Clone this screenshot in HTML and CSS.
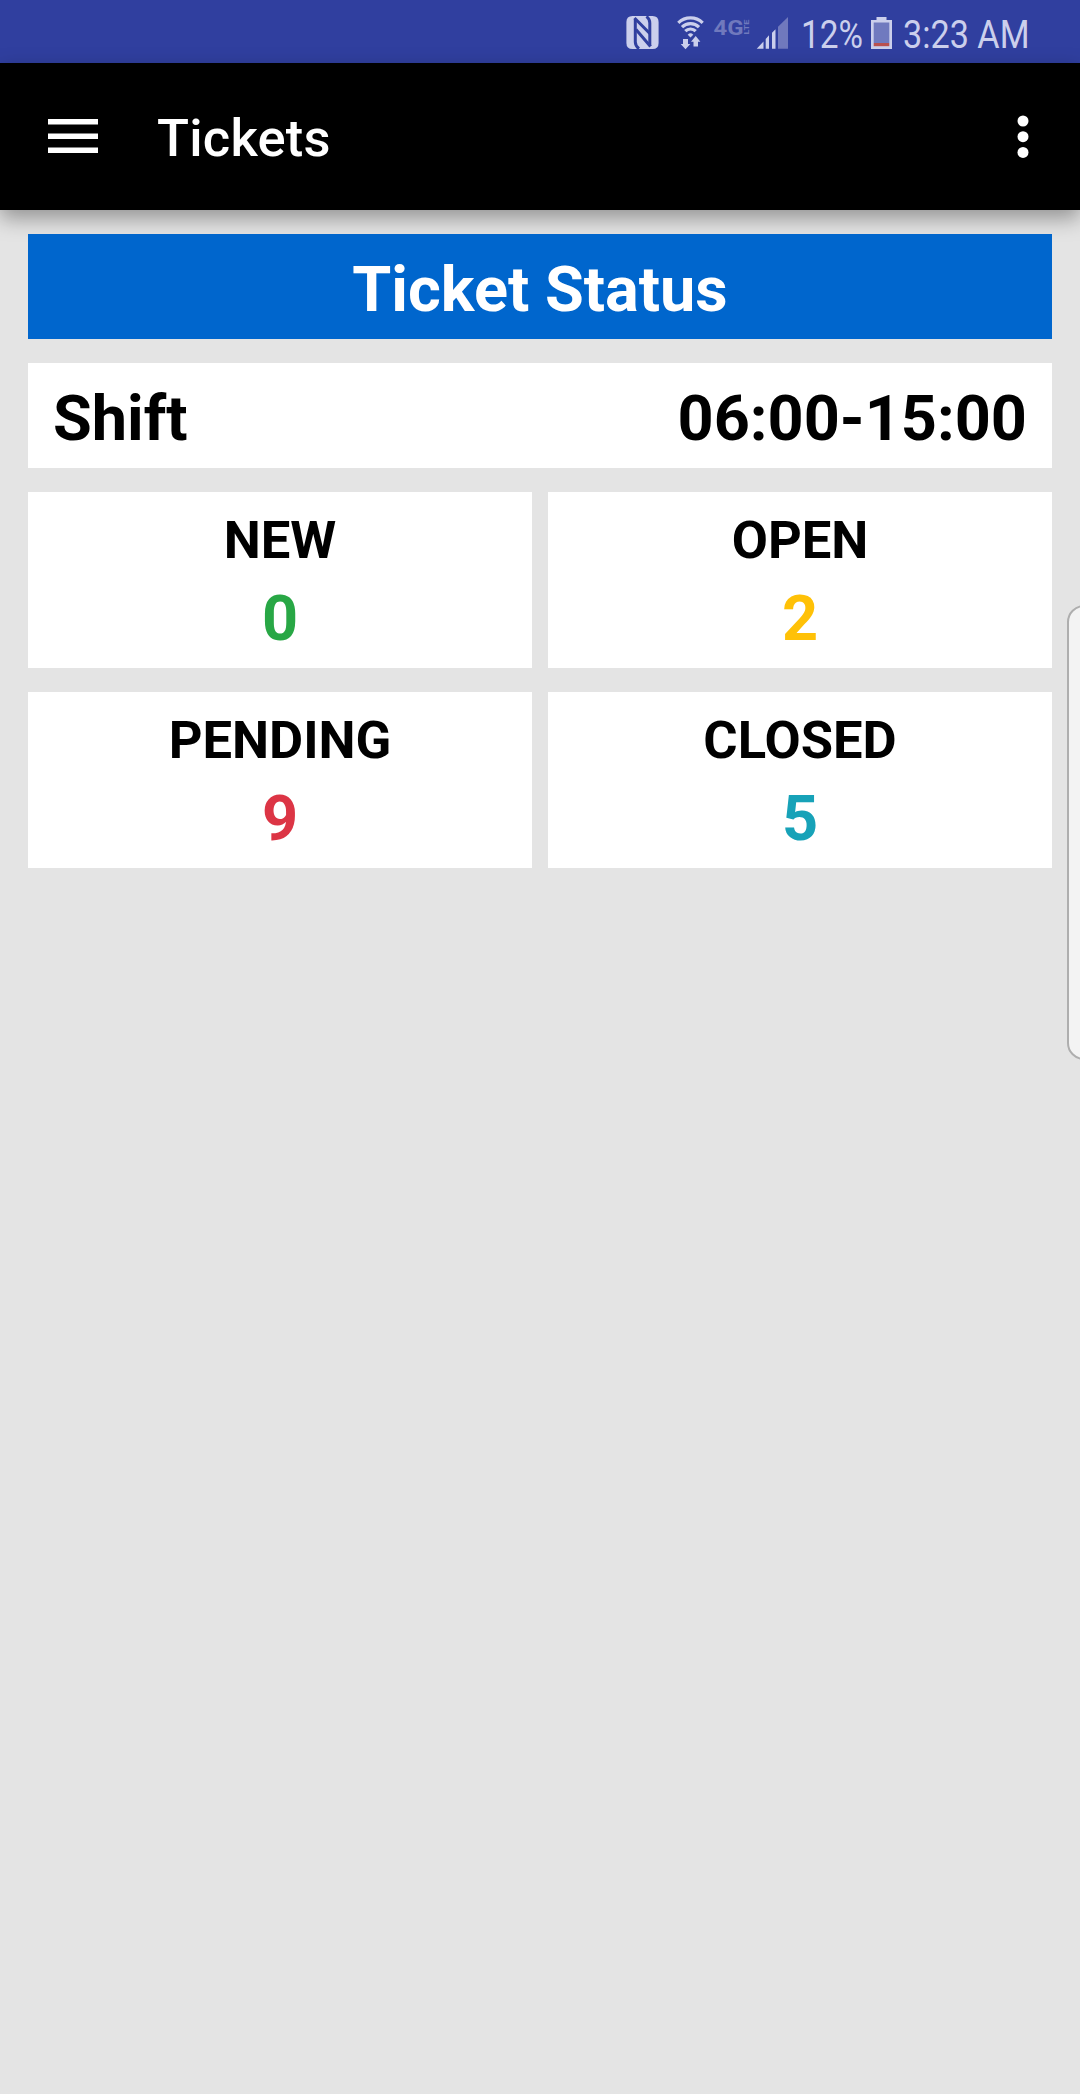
FILE: index.html
```html
<!DOCTYPE html>
<html lang="en">
<head>
<meta charset="utf-8">
<title>Tickets</title>
<link rel="stylesheet" href="styles.css">
</head>
<body>
<div class="status-bar">
  <svg class="status-icons" width="460" height="63" viewBox="620 0 460 63" aria-hidden="true">
    <g class="lit">
      <path d="M632.500 16H652.500Q658.600 16 658.600 22V43Q658.600 49 652.500 49H632.500Q626.400 49 626.400 43V22Q626.400 16 632.500 16Z"/>
      <path d="M690.500 37.500L687.700 34.700A4 4 0 0 1 693.300 34.700Z"/>
      <path d="M683 39H688V44H690.300L685.500 49.200L680.700 44H683Z"/>
      <path d="M693.500 46.500V41.700H691L695.700 36L700.400 41.700H698V46.500Z"/>
      <path d="M756.700 48.700L763.500 41.500V48.700ZM765.700 39L769 35.300V48.700H765.700ZM772 32.800L775.500 29.300V48.700H772Z"/>
    </g>
    <g class="cut">
      <path d="M635.300 19V42Q635.300 46 639 48.700"/>
      <path d="M649.800 46V23Q649.800 19 646.500 16.300"/>
      <path d="M634.500 18L649.800 33.500M636 29.500L650.500 46.500"/>
    </g>
    <g class="waves">
      <path d="M678.300 22.900A17.500 17.500 0 0 1 702.700 22.900"/>
      <path d="M682 27.100A12 12 0 0 1 699 27.100"/>
      <path d="M685.300 31.200A7.300 7.300 0 0 1 695.700 31.200"/>
    </g>
    <path class="dim" d="M778 26.700L788 17V48.700H778Z"/>
    <text class="network" x="713.500" y="34.500" textLength="30" lengthAdjust="spacingAndGlyphs">4G</text>
    <text class="lte" transform="translate(748.700 34.500) rotate(-90)" textLength="15" lengthAdjust="spacingAndGlyphs">LTE</text>
    <text class="reading" x="801" y="48" textLength="62" lengthAdjust="spacingAndGlyphs">12%</text>
    <path class="lit" d="M871 20H876.500V17H886.500V20H892V49H871Z"/>
    <path class="charge" d="M873.700 22.500H889.300V43H873.700Z"/>
    <path class="low" d="M873.700 43H889.300V46.200H873.700Z"/>
    <text class="reading" x="903" y="48" textLength="126.500" lengthAdjust="spacingAndGlyphs">3:23 AM</text>
  </svg>
</div>
<header class="app-bar">
  <svg class="menu" width="50" height="35" viewBox="0 0 50 35" aria-label="Menu"><path d="M0 0H50V5.500H0ZM0 14.500H50V20H0ZM0 28.500H50V34H0Z"/></svg>
  <h1 class="title">Tickets</h1>
  <svg class="more" width="12" height="44" viewBox="0 0 12 44" aria-label="More"><circle cx="6" cy="6" r="5.500"/><circle cx="6" cy="21.700" r="5.500"/><circle cx="6" cy="37.400" r="5.500"/></svg>
</header>
<main class="content">
  <h2 class="row heading">Ticket Status</h2>
  <section class="row shift"><span>Shift</span><span>06:00-15:00</span></section>
  <section class="tiles">
    <div class="tile"><span class="label">NEW</span><span class="count new">0</span></div>
    <div class="tile"><span class="label">OPEN</span><span class="count open">2</span></div>
    <div class="tile"><span class="label">PENDING</span><span class="count pending">9</span></div>
    <div class="tile"><span class="label">CLOSED</span><span class="count closed">5</span></div>
  </section>
</main>
<div class="edge-handle"></div>
</body>
</html>
```

FILE: styles.css
```css
* { box-sizing: border-box; }

body {
  position: relative;
  margin: 0;
  min-height: 2094px;
  overflow: hidden;
  background: #e4e4e4;
  font-family: Roboto, "Liberation Sans", sans-serif;
  color: #000;
}

.status-bar {
  display: flex;
  justify-content: flex-end;
  height: 63px;
  background: #303f9f;
}

.status-icons { display: block; }
.lit { fill: #cbcfec; }
.cut { fill: none; stroke: #303f9f; stroke-width: 3; }
.waves { fill: none; stroke: #cbcfec; stroke-width: 3.2; }
.dim { fill: #7079bd; }
.charge { fill: #707abf; }
.low { fill: #b9504f; }
.reading { fill: #cbcfec; font-size: 39.500px; }
.network { fill: #7079bd; font-size: 21px; font-weight: 700; }
.lte { fill: #7079bd; font-size: 8px; font-weight: 700; }

.app-bar {
  position: relative;
  display: flex;
  align-items: center;
  height: 147px;
  padding: 0 51px 0 48px;
  background: #000;
  color: #fff;
  box-shadow: 0 8px 20px rgba(0, 0, 0, 0.36);
}

.menu { fill: #fff; }
.more { margin-left: auto; fill: #fff; }

.title {
  margin: 2px 0 0 59px;
  font-size: 52.500px;
  font-weight: 500;
  line-height: 62px;
  letter-spacing: 0.2px;
}

.content {
  position: relative;
  display: flex;
  flex-direction: column;
  gap: 24px;
  padding: 24px 28px;
}

.row {
  height: 105px;
  margin: 0;
  padding: 6px 25px 0;
  background: #fff;
  font-size: 63px;
  font-weight: 700;
  line-height: 100px;
}

.heading {
  background: #0066cd;
  color: #fff;
  text-align: center;
}

.shift {
  display: flex;
  justify-content: space-between;
}

.tiles {
  display: grid;
  grid-template-columns: 1fr 1fr;
  gap: 24px 16px;
}

.tile {
  display: flex;
  flex-direction: column;
  height: 176px;
  padding-top: 17px;
  background: #fff;
  font-weight: 700;
  text-align: center;
}

.label { font-size: 52.500px; line-height: 62px; }
.count { font-size: 63px; line-height: 96px; }
.new { color: #28a745; }
.open { color: #ffc107; }
.pending { color: #dc3545; }
.closed { color: #17a2b8; }

.edge-handle {
  position: absolute;
  top: 605px;
  right: -12px;
  width: 25px;
  height: 455px;
  border: 2px solid #aeaeae;
  border-radius: 17px 0 0 17px;
  background: #f3f3f3;
}
```
